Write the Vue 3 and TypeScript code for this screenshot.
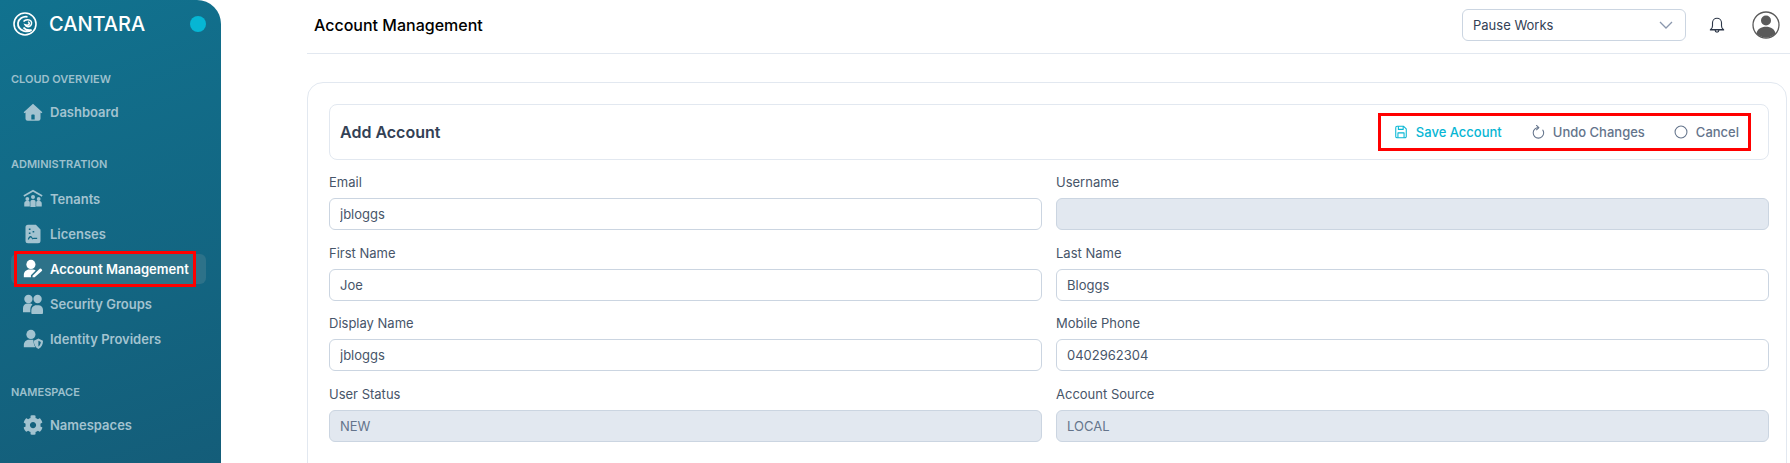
<script setup lang="ts">
type NavItem = { label: string; icon: string; active?: boolean }
type NavSection = { title: string; items: NavItem[] }

const sections: NavSection[] = [
  { title: 'CLOUD OVERVIEW', items: [{ label: 'Dashboard', icon: 'home' }] },
  {
    title: 'ADMINISTRATION',
    items: [
      { label: 'Tenants', icon: 'tenants' },
      { label: 'Licenses', icon: 'licenses' },
      { label: 'Account Management', icon: 'account', active: true },
      { label: 'Security Groups', icon: 'groups' },
      { label: 'Identity Providers', icon: 'identity' },
    ],
  },
  { title: 'NAMESPACE', items: [{ label: 'Namespaces', icon: 'cog' }] },
]

const fields = [
  { label: 'Email', value: 'jbloggs', disabled: false },
  { label: 'Username', value: '', disabled: true },
  { label: 'First Name', value: 'Joe', disabled: false },
  { label: 'Last Name', value: 'Bloggs', disabled: false },
  { label: 'Display Name', value: 'jbloggs', disabled: false },
  { label: 'Mobile Phone', value: '0402962304', disabled: false },
  { label: 'User Status', value: 'NEW', disabled: true },
  { label: 'Account Source', value: 'LOCAL', disabled: true },
]
</script>

<template>
  <div class="page">
    <aside class="sidebar">
      <div class="brand">
        <svg class="logo" viewBox="0 0 24 24" fill="none" stroke="#fff">
          <circle cx="12" cy="12" r="11" stroke-width="1.600" />
          <path d="M14.500 4.800C10 4 5.500 6.800 5 11c-.4 3.500 2 6.500 5.500 7.800 3 1 6 .7 8-.8-3.500.6-6.500-.5-8-2.500" stroke-width="1.800" />
          <path d="M10.500 9.500c2-2.300 6-2.500 7.500-.3 1.300 2 .4 4.600-1.800 5.300-1.700.5-3.500-.2-4.200-1.700 1.500.6 3.300.5 4-.5.600-.9.200-2-1-2.400" stroke-width="1.500" />
        </svg>
        <span class="brand-name">CANTARA</span>
        <span class="brand-dot"></span>
      </div>

      <section v-for="section in sections" :key="section.title" class="nav-section">
        <div class="nav-title">{{ section.title }}</div>
        <a v-for="item in section.items" :key="item.label" class="nav-item" :class="{ active: item.active }">
          <svg class="nav-icon" viewBox="0 0 24 24" fill="currentColor">
            <template v-if="item.icon === 'home'">
              <path fill-rule="evenodd" d="M12 2 .8 12.300l1 1.200L3 12.500V20a2.500 2.500 0 0 0 2.500 2.500h13A2.500 2.500 0 0 0 21 20v-7.500l1.200 1 1-1.200zM10 16a1 1 0 0 1 1-1h2a1 1 0 0 1 1 1v5h-4z" />
            </template>
            <template v-else-if="item.icon === 'tenants'">
              <path d="M12 1 .5 7.500l1 1.700L12 3.300l10.500 5.900 1-1.700z" />
              <circle cx="12" cy="9.500" r="2.400" />
              <circle cx="5.200" cy="12" r="2.300" />
              <circle cx="18.800" cy="12" r="2.300" />
              <path d="M1.500 21v-3.500c0-2 1.500-3.300 3.700-3.300s3 .8 3 2.300V21zM15.800 21v-4.500c0-1.500.8-2.300 3-2.300s3.700 1.300 3.700 3.300V21zM8.800 21.500v-6c0-1.500 1.400-2.500 3.200-2.500s3.200 1 3.200 2.500v6z" />
            </template>
            <template v-else-if="item.icon === 'licenses'">
              <path fill-rule="evenodd" d="M6 1h9.500L21 6.500V20a3 3 0 0 1-3 3H6a3 3 0 0 1-3-3V4a3 3 0 0 1 3-3zM7 5.500v1.800h2V5.500zm4.500 3v1.800h2V8.500zM7 10.200V12h2v-1.800zM7 19c1.500-3.500 2.500-3.500 3.500-1.500.6 1.200 1.200 1.200 1.800.4h4.700v-1.300h-4.300c-.8.800-1 .6-1.300 0-1.500-3-4-3-5.700 1.800z" />
            </template>
            <template v-else-if="item.icon === 'account'">
              <circle cx="9.500" cy="6.500" r="5.500" />
              <path d="M1 22v-3c0-3.800 3-6.500 6.500-6.500h4c1.500 0 2.800.4 3.800 1.200L9.500 19.500V22z" />
              <path d="M11.500 22v-1.800L20 11.700a1.300 1.300 0 0 1 1.800 0l.8.800a1.300 1.300 0 0 1 0 1.800L14 22z" />
            </template>
            <template v-else-if="item.icon === 'groups'">
              <circle cx="6.500" cy="6" r="5" />
              <circle cx="17.500" cy="6" r="5" />
              <path d="M0 22v-5c0-3.500 2.500-5.500 5.500-5.500H8c1.500 0 2.500.5 3.300 1.200C9.300 14.500 8.800 17 8.800 19.500V22z" />
              <path d="M11 24c-.6 0-1-.4-1-1v-3c0-3.800 2.500-6.500 6-6.500h2.500c3 0 5.500 2 5.500 5.500v3.500c0 .9-.5 1.500-1.500 1.500z" />
            </template>
            <template v-else-if="item.icon === 'identity'">
              <circle cx="9.500" cy="6.500" r="5.500" />
              <path d="M1 22v-2.500C1 16 3.500 13 7 13h5.300l.7 4.500c.3 1.800 1 3.300 2 4.500z" />
              <path fill-rule="evenodd" d="M18.500 11.500 24 14c0 4-1.500 8-5.500 10-4-2-5.500-6-5.500-10zm0 2.700v6.900c1.700-1.200 2.700-3.300 2.900-5.500z" />
            </template>
            <template v-else>
              <path transform="scale(.047)" d="M487.400 315.700l-42.600-24.600c4.300-23.200 4.300-47 0-70.200l42.600-24.600c4.900-2.800 7.100-8.600 5.500-14-11.100-35.600-30-67.800-54.700-94.600-3.800-4.100-10-5.100-14.800-2.300L380.800 110c-17.900-15.400-38.500-27.300-60.800-35.100V25.800c0-5.600-3.900-10.500-9.400-11.700-36.700-8.200-74.300-7.800-109.200 0-5.500 1.200-9.400 6.100-9.400 11.700V75c-22.200 7.900-42.800 19.800-60.800 35.100L88.700 85.500c-4.900-2.800-11-1.900-14.800 2.300-24.700 26.700-43.600 58.900-54.700 94.600-1.700 5.400.6 11.200 5.500 14L67.300 221c-4.300 23.200-4.300 47 0 70.200l-42.600 24.600c-4.900 2.800-7.100 8.600-5.500 14 11.100 35.600 30 67.800 54.700 94.600 3.800 4.100 10 5.100 14.800 2.300l42.600-24.600c17.900 15.400 38.500 27.300 60.800 35.100v49.200c0 5.600 3.900 10.500 9.400 11.700 36.700 8.200 74.300 7.800 109.200 0 5.500-1.200 9.400-6.100 9.400-11.700v-49.200c22.200-7.900 42.800-19.800 60.800-35.100l42.600 24.600c4.900 2.800 11 1.900 14.800-2.300 24.700-26.700 43.600-58.900 54.700-94.600 1.500-5.500-.7-11.300-5.600-14.100zM256 336c-44.100 0-80-35.900-80-80s35.900-80 80-80 80 35.900 80 80-35.900 80-80 80z" />
            </template>
          </svg>
          <span>{{ item.label }}</span>
        </a>
      </section>
    </aside>

    <main class="main">
      <header class="topbar">
        <h1>Account Management</h1>
        <div class="topbar-right">
          <div class="select">
            <span>Pause Works</span>
            <svg width="14" height="8" viewBox="0 0 14 8" fill="none" stroke="#8a97ad" stroke-width="1.300"><path d="M1 1l6 6 6-6" /></svg>
          </div>
          <svg class="bell" viewBox="0 0 24 24" fill="none" stroke="#2d3748" stroke-width="1.500">
            <path d="M12 3a6 6 0 0 0-6 6v4c0 2.500-1 4-2.500 5h17C19 17 18 15.500 18 13V9a6 6 0 0 0-6-6z" stroke-linejoin="round" />
            <path d="M2.500 18.500h19M9.500 19a2.500 2.500 0 0 0 5 0" />
          </svg>
          <svg class="avatar" viewBox="0 0 28 28">
            <circle cx="14" cy="14" r="13" fill="#fff" stroke="#5a5a5a" stroke-width="1.300" />
            <circle cx="14" cy="9.500" r="5" fill="#5a5a5a" />
            <path d="M4.500 22.500C5.500 18 9 15.800 14 15.800S22.500 18 23.500 22.500A13 13 0 0 1 14 26.500a13 13 0 0 1-9.500-4z" fill="#5a5a5a" />
          </svg>
        </div>
      </header>

      <div class="card">
        <div class="card-head">
          <h2>Add Account</h2>
          <div class="actions">
            <button class="action primary">
              <svg viewBox="0 0 16 16" fill="none" stroke="currentColor" stroke-width="1.200" stroke-linejoin="round">
                <path d="M2 3a1.500 1.500 0 0 1 1.500-1.500h7.500l3 3V13a1.500 1.500 0 0 1-1.500 1.500h-9A1.500 1.500 0 0 1 2 13z" />
                <path d="M5 1.500v3.500h5.500V1.500M4.500 14.500V9h7v5.500" />
              </svg>
              Save Account
            </button>
            <button class="action">
              <svg viewBox="0 0 16 16" fill="none" stroke="currentColor" stroke-width="1.200">
                <path d="M8.500 3a6 6 0 1 0 6 6.200c0-1.300-.4-2.400-1-3.300" stroke-linecap="round" />
                <path d="M6.300 .5 9 3 6.300 5.500" stroke-linecap="round" stroke-linejoin="round" />
              </svg>
              Undo Changes
            </button>
            <button class="action">
              <svg viewBox="0 0 16 16" fill="none" stroke="currentColor" stroke-width="1.200"><circle cx="8" cy="8" r="6.800" /></svg>
              Cancel
            </button>
          </div>
        </div>

        <div class="form">
          <label v-for="field in fields" :key="field.label" class="field">
            <span>{{ field.label }}</span>
            <input :value="field.value" :disabled="field.disabled" />
          </label>
        </div>
      </div>
    </main>
  </div>
</template>

<style scoped>
.page {
  display: flex;
  height: 463px;
  overflow: hidden;
  background: #fff;
  font-family: Inter, 'Noto Sans', sans-serif;
}

.sidebar {
  width: 221px;
  flex-shrink: 0;
  box-sizing: border-box;
  padding: 0 15px 0 11px;
  border-top-right-radius: 24px;
  background: linear-gradient(160deg, #11728f 0%, #145d79 100%);
}

.brand {
  display: flex;
  align-items: center;
  height: 48px;
  padding: 0 0 0 2px;
}

.logo {
  width: 24px;
  height: 24px;
}

.brand-name {
  margin-left: 12px;
  font-size: 20px;
  font-weight: 500;
  color: #fff;
}

.brand-dot {
  width: 16px;
  height: 16px;
  margin-left: auto;
  border-radius: 50%;
  background: #06b6d4;
}

.nav-section {
  margin-bottom: 28px;
}

.nav-section:first-of-type {
  margin-top: 22px;
}

.nav-section:nth-of-type(2) {
  margin-bottom: 29px;
}

.nav-section:nth-of-type(2) .nav-title + .nav-item {
  margin-top: 11px;
}

.nav-title {
  height: 18px;
  font-size: 11px;
  line-height: 18px;
  font-weight: 600;
  color: #9cc0cd;
}

.nav-item {
  position: relative;
  display: flex;
  align-items: center;
  height: 30px;
  margin: 0 0 5px;
  padding-left: 12px;
  border-radius: 6px;
  font-size: 13px;
  font-weight: 600;
  color: #a3c3d0;
}

.nav-title + .nav-item {
  margin-top: 9px;
}

.nav-item.active {
  background: #2d7289;
  color: #fff;
}

/* red marker from the original annotated screenshot */
.nav-item.active::after {
  content: '';
  position: absolute;
  top: -3px;
  left: 3px;
  width: 182px;
  height: 36px;
  box-sizing: border-box;
  border: 3px solid #f00;
}

.nav-icon {
  width: 20px;
  height: 20px;
  margin-right: 7px;
  flex-shrink: 0;
}

.main {
  flex: 1;
  min-width: 0;
  margin-left: 86px;
  margin-right: 3px;
}

.topbar {
  display: flex;
  align-items: center;
  justify-content: space-between;
  height: 49px;
  margin-right: -3px;
  padding: 0 10px 4px 7px;
  box-sizing: content-box;
  border-bottom: 1px solid #e2e8f0;
}

.topbar h1 {
  margin: 0;
  font-size: 16px;
  font-weight: 500;
  color: #000;
}

.topbar-right {
  display: flex;
  align-items: center;
}

.select {
  display: flex;
  align-items: center;
  justify-content: space-between;
  width: 224px;
  height: 32px;
  box-sizing: border-box;
  padding: 0 12px 0 10px;
  border: 1px solid #cbd5e1;
  border-radius: 6px;
  font-size: 13px;
  color: #334155;
}

.bell {
  width: 18px;
  height: 18px;
  margin-left: 22px;
}

.avatar {
  width: 28px;
  height: 28px;
  margin-left: 26px;
}

.card {
  margin-top: 28px;
  padding: 21px 17px 40px 21px;
  border: 1px solid #e2e8f0;
  border-radius: 16px;
}

.card-head {
  display: flex;
  align-items: center;
  justify-content: space-between;
  height: 56px;
  box-sizing: border-box;
  padding: 0 17px 0 10px;
  border: 1px solid #e2e8f0;
  border-radius: 8px;
}

.card-head h2 {
  margin: 0;
  font-size: 16px;
  font-weight: 600;
  color: #334155;
}

.actions {
  display: flex;
  align-items: center;
  gap: 29px;
  height: 38px;
  box-sizing: border-box;
  padding: 0 9px 0 13px;
  border: 3px solid #f00;
}

.action {
  display: flex;
  align-items: center;
  gap: 8px;
  padding: 0;
  border: none;
  background: none;
  font: inherit;
  font-size: 13px;
  font-weight: 500;
  color: #64748b;
}

.action svg {
  width: 14px;
  height: 14px;
}

.action.primary {
  color: #06b6d4;
}

.form {
  display: grid;
  grid-template-columns: 1fr 1fr;
  column-gap: 14px;
  row-gap: 11.6px;
  margin-top: 11px;
}

.field {
  display: block;
}

.field span {
  display: block;
  height: 27px;
  font-size: 13px;
  line-height: 22px;
  color: #475569;
}

.field input {
  display: block;
  width: 100%;
  height: 32px;
  box-sizing: border-box;
  padding: 0 10px;
  border: 1px solid #cbd5e1;
  border-radius: 6px;
  outline: none;
  background: #fff;
  font: inherit;
  font-size: 13px;
  color: #475569;
}

.field input:disabled {
  background: #e2e8f0;
  color: #64748b;
}
</style>
